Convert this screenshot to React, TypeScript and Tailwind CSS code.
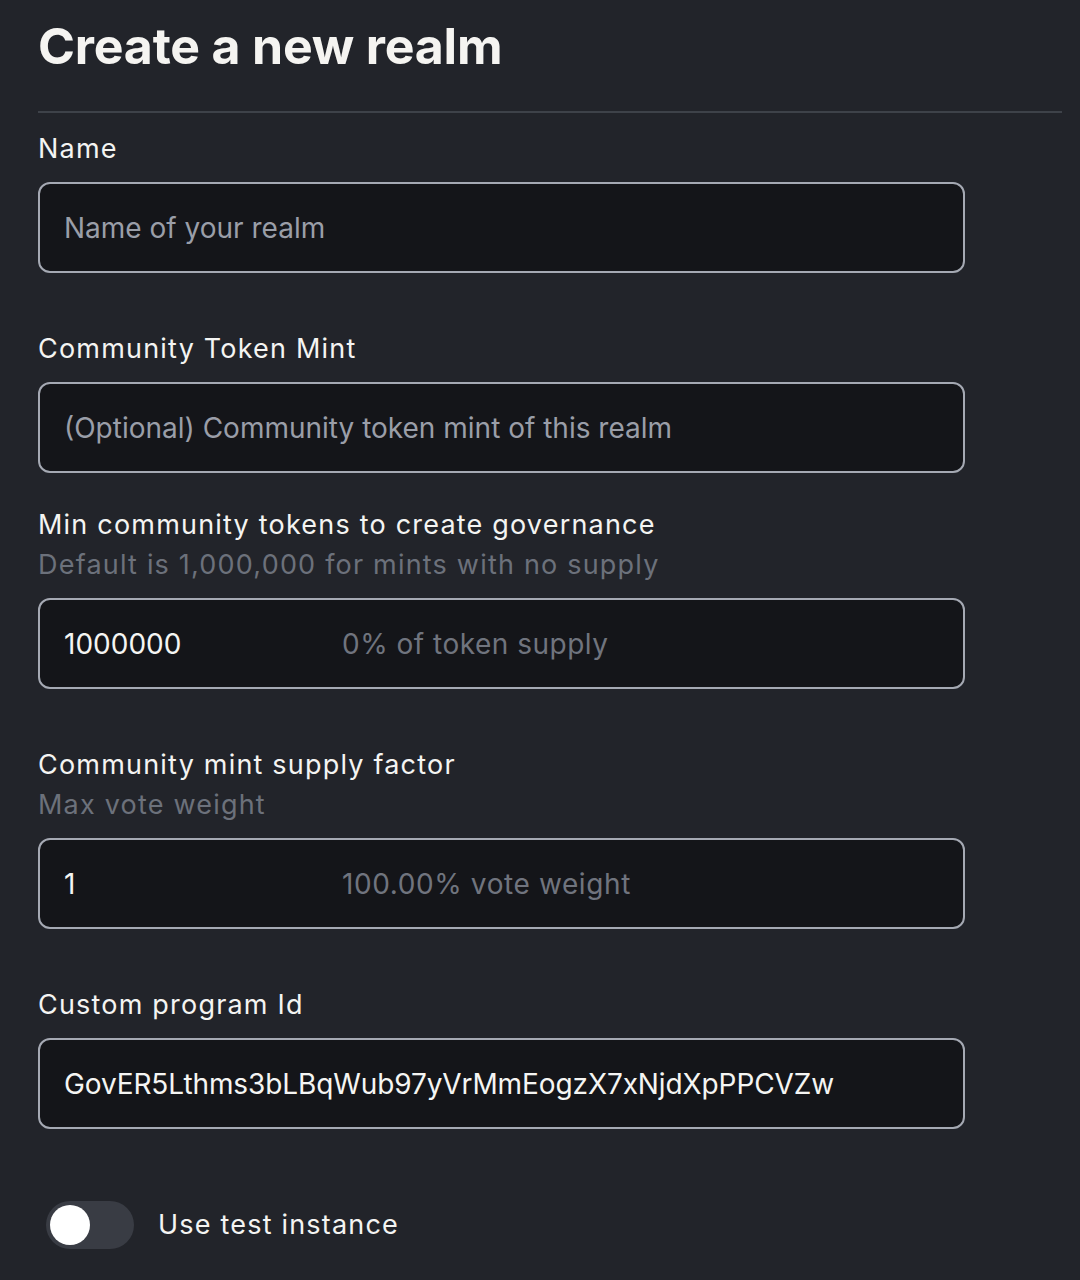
import { useState } from "react"

const font = { fontFamily: "Inter, 'Noto Sans', sans-serif" }

function Field({
  label,
  hint,
  children,
  className = "",
}: {
  label: string
  hint?: string
  children: React.ReactNode
  className?: string
}) {
  return (
    <div className={className}>
      <p className="text-[27px] leading-[40px] tracking-[1.2px] text-[#f4f4f2]">{label}</p>
      {hint && <p className="text-[27px] leading-[40px] tracking-[1.2px] text-[#6c717b]">{hint}</p>}
      <div className="mt-[13px] flex h-[91px] w-[927px] items-center rounded-[12px] border-2 border-[#a5a9b3] bg-[#141519] px-[24px]">
        {children}
      </div>
    </div>
  )
}

export default function App() {
  const [testInstance, setTestInstance] = useState(false)

  return (
    <div className="min-h-screen w-full bg-[#22242a] pl-[38px] pr-[18px]" style={font}>
      {/* Header */}
      <h1 className="pt-[14px] text-[50px] font-bold leading-[64px] tracking-[-0.2px] text-[#f5f4f1]">
        Create a new realm
      </h1>
      <div className="mt-[33px] h-[2px] w-full bg-[#3e4249]" />

      <Field label="Name" className="mt-[16px]">
        <span className="text-[28px] text-[#9a9ea8]">Name of your realm</span>
      </Field>

      <Field label="Community Token Mint" className="mt-[56px]">
        <span className="text-[28px] text-[#9a9ea8]">(Optional) Community token mint of this realm</span>
      </Field>

      <Field
        label="Min community tokens to create governance"
        hint="Default is 1,000,000 for mints with no supply"
        className="mt-[32px]"
      >
        <span className="w-[278px] text-[28px] text-[#f5f5f3]">1000000</span>
        <span className="text-[28px] tracking-[0.5px] text-[#70747e]">0% of token supply</span>
      </Field>

      <Field label="Community mint supply factor" hint="Max vote weight" className="mt-[56px]">
        <span className="w-[278px] text-[28px] text-[#f5f5f3]">1</span>
        <span className="text-[28px] tracking-[0.6px] text-[#70747e]">100.00% vote weight</span>
      </Field>

      <Field label="Custom program Id" className="mt-[56px]">
        <span className="text-[28px] tracking-[-0.1px] text-[#f5f5f3]">GovER5Lthms3bLBqWub97yVrMmEogzX7xNjdXpPPCVZw</span>
      </Field>

      {/* Toggle */}
      <div className="mt-[72px] flex items-center gap-[24px] pl-[8px]">
        <button
          onClick={() => setTestInstance(!testInstance)}
          className={`flex h-[48px] w-[88px] items-center rounded-full px-[4px] ${
            testInstance ? "justify-end bg-[#5b6cf0]" : "justify-start bg-[#393c44]"
          }`}
        >
          <span className="h-[40px] w-[40px] rounded-full bg-white" />
        </button>
        <span className="text-[27px] tracking-[1.2px] text-[#f4f4f2]">Use test instance</span>
      </div>
    </div>
  )
}
